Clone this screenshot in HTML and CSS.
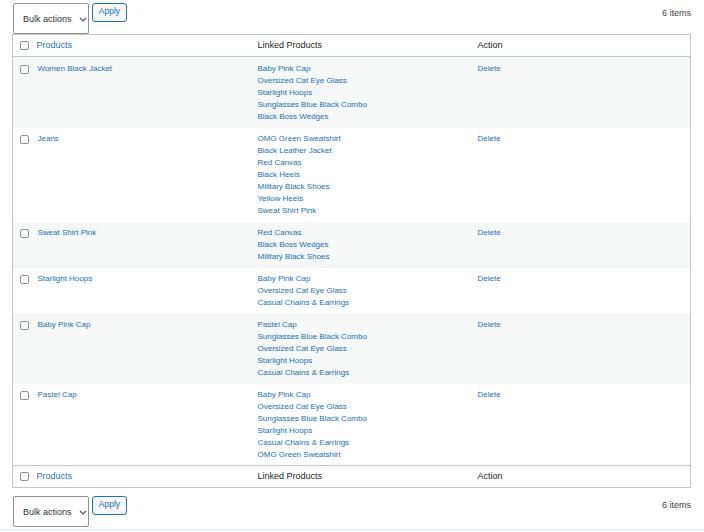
FILE: index.html
```html
<!DOCTYPE html>
<html>
<head>
<meta charset="utf-8">
<link rel="stylesheet" href="styles.css">
</head>
<body>
<div class="wrap">
  <div class="tablenav top">
    <div class="actions">
      <div class="select">Bulk actions <svg class="chev" width="8" height="5" viewBox="0 0 8 5"><path d="M1 1l3 3 3-3" fill="none" stroke="#50575e" stroke-width="1.2"/></svg></div>
      <button class="apply">Apply</button>
    </div>
    <div class="count">6 items</div>
  </div>
  <table class="list">
    <colgroup><col class="c-check"><col class="c-prod"><col class="c-linked"><col class="c-action"></colgroup>
    <thead>
      <tr><th class="cb"><input type="checkbox"></th><th><a>Products</a></th><th>Linked Products</th><th>Action</th></tr>
    </thead>
    <tbody>
      <tr class="alt"><td class="cb"><input type="checkbox"></td><td><a>Women Black Jacket</a></td><td><a>Baby Pink Cap</a><a>Oversized Cat Eye Glass</a><a>Starlight Hoops</a><a>Sunglasses Blue Black Combo</a><a>Black Boss Wedges</a></td><td><a>Delete</a></td></tr>
      <tr><td class="cb"><input type="checkbox"></td><td><a>Jeans</a></td><td><a>OMG Green Sweatshirt</a><a>Black Leather Jacket</a><a>Red Canvas</a><a>Black Heels</a><a>Military Black Shoes</a><a>Yellow Heels</a><a>Sweat Shirt Pink</a></td><td><a>Delete</a></td></tr>
      <tr class="alt"><td class="cb"><input type="checkbox"></td><td><a>Sweat Shirt Pink</a></td><td><a>Red Canvas</a><a>Black Boss Wedges</a><a>Military Black Shoes</a></td><td><a>Delete</a></td></tr>
      <tr><td class="cb"><input type="checkbox"></td><td><a>Starlight Hoops</a></td><td><a>Baby Pink Cap</a><a>Oversized Cat Eye Glass</a><a>Casual Chains &amp; Earrings</a></td><td><a>Delete</a></td></tr>
      <tr class="alt"><td class="cb"><input type="checkbox"></td><td><a>Baby Pink Cap</a></td><td><a>Pastel Cap</a><a>Sunglasses Blue Black Combo</a><a>Oversized Cat Eye Glass</a><a>Starlight Hoops</a><a>Casual Chains &amp; Earrings</a></td><td><a>Delete</a></td></tr>
      <tr><td class="cb"><input type="checkbox"></td><td><a>Pastel Cap</a></td><td><a>Baby Pink Cap</a><a>Oversized Cat Eye Glass</a><a>Sunglasses Blue Black Combo</a><a>Starlight Hoops</a><a>Casual Chains &amp; Earrings</a><a>OMG Green Sweatshirt</a></td><td><a>Delete</a></td></tr>
    </tbody>
    <tfoot>
      <tr><th class="cb"><input type="checkbox"></th><th><a>Products</a></th><th>Linked Products</th><th>Action</th></tr>
    </tfoot>
  </table>
  <div class="tablenav bottom">
    <div class="actions">
      <div class="select">Bulk actions <svg class="chev" width="8" height="5" viewBox="0 0 8 5"><path d="M1 1l3 3 3-3" fill="none" stroke="#50575e" stroke-width="1.2"/></svg></div>
      <button class="apply">Apply</button>
    </div>
    <div class="count">6 items</div>
  </div>
</div>
<div class="footer-strip"></div>
</body>
</html>
```
FILE: styles.css
```css
* { box-sizing: border-box; }
html, body { margin: 0; padding: 0; background: #fff; }
body {
  font-family: "Liberation Sans", Arial, sans-serif;
  font-size: 9px;
  color: #3c434a;
  width: 704px;
  height: 532px;
  overflow: hidden;
}
.wrap { padding: 3px 13px 0 12px; height: 529px; }
.tablenav { display: flex; justify-content: space-between; align-items: flex-start; }
.tablenav.bottom { margin-top: 8px; }
.actions { display: flex; align-items: flex-start; margin-left: 1px; }
.select {
  width: 76px; height: 31px;
  border: 1px solid #8c8f94;
  border-radius: 2px;
  background: #fff;
  color: #2c3338;
  display: flex; align-items: center;
  padding-left: 9px;
  font-size: 9px;
  white-space: nowrap;
}
.chev { margin-left: 7px; margin-top: 1px; flex: none; }
.apply {
  margin-left: 3px;
  width: 35px; height: 19px;
  border: 1px solid #2271b1;
  border-radius: 3px;
  background: #f6f7f7;
  color: #2271b1;
  font-family: inherit;
  font-size: 8.5px;
  padding: 0 0 3px;
  line-height: 1;
}
.count { padding-top: 5px; font-size: 9px; color: #3c434a; }
.tablenav.bottom .count { padding-top: 4px; }
.list {
  width: 679px;
  border: 1px solid #c3c4c7;
  border-collapse: collapse;
  table-layout: fixed;
}
.c-check { width: 24px; }
.c-prod { width: 220px; }
.c-linked { width: 220px; }
th, td { text-align: left; font-weight: normal; padding: 0; line-height: 12px; vertical-align: top; }
thead th, tfoot th { height: 22px; vertical-align: middle; color: #1d2327; font-size: 9px; padding-bottom: 2px; }
thead tr { border-bottom: 1px solid #c3c4c7; }
tfoot tr { border-top: 1px solid #c3c4c7; }
tbody td { padding: 5px 0; font-size: 8px; }
tbody td:nth-child(3), tbody td:nth-child(4) { padding-left: 1px; }
thead th:nth-child(3), thead th:nth-child(4), tfoot th:nth-child(3), tfoot th:nth-child(4) { padding-left: 1px; }
tbody td.cb { padding-top: 7px; }
tbody tr:first-child td { padding-top: 6px; }
tbody tr:first-child td.cb { padding-top: 8px; }
tbody tr:last-child td { padding-bottom: 4px; }
.cb { padding-left: 7px; }
th.cb { padding-top: 0; padding-bottom: 1px; }
tbody tr.alt { background: #f6f7f7; }
a { color: #2271b1; display: block; text-decoration: none; }
th a { display: inline; }
td:nth-child(2) a { padding-left: 1px; }
input[type=checkbox] {
  -webkit-appearance: none; appearance: none;
  width: 9px; height: 9px; margin: 0;
  border: 1px solid #8c8f94; border-radius: 2px;
  background: #fff; display: block;
}
.footer-strip { height: 3px; border-top: 1px solid #e1ecf7; background: #f6f9fc; }
```
